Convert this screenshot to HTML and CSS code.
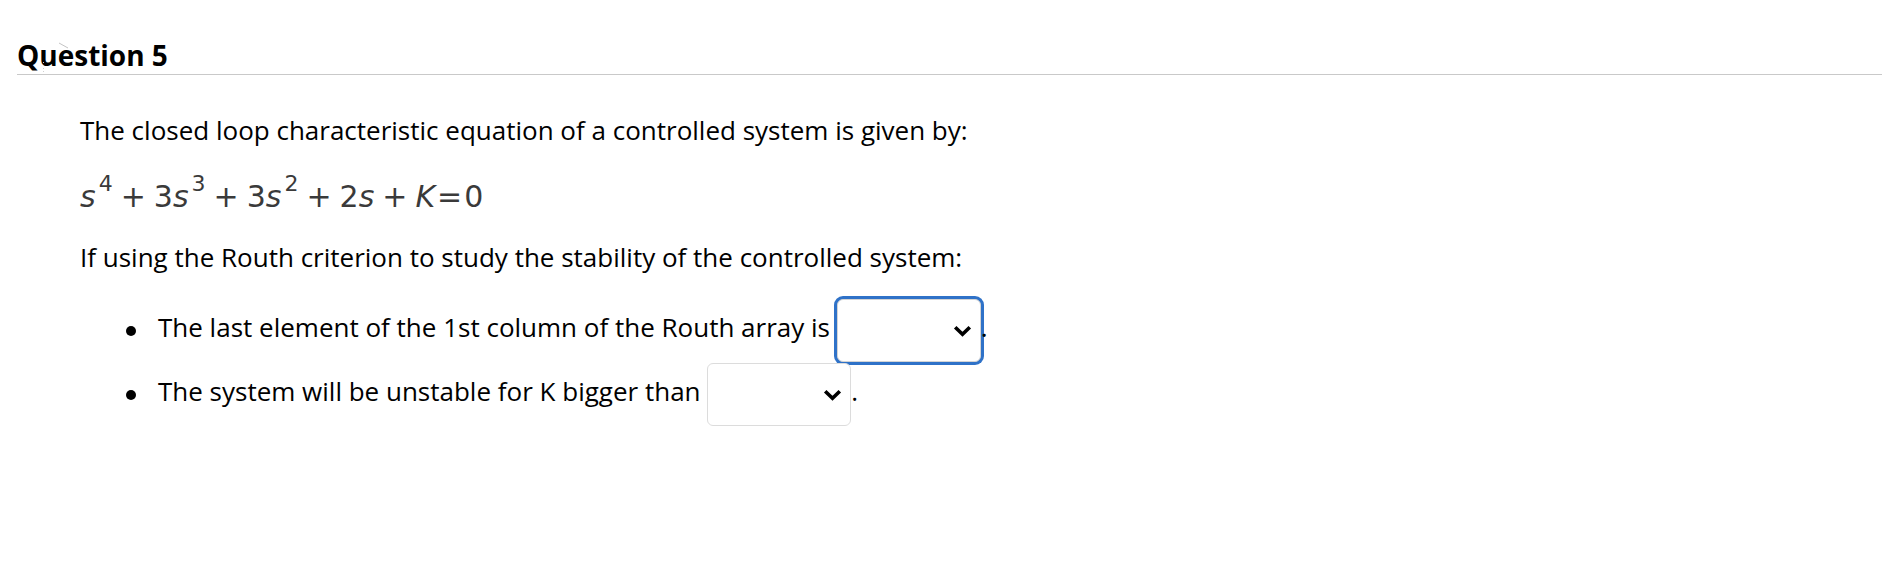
FILE: index.html
```html
<!DOCTYPE html>
<html lang="en">
<head>
<meta charset="utf-8">
<title>Question 5</title>
<link rel="stylesheet" href="styles.css">
</head>
<body>
<div class="question">
  <div class="question-header">
    <h2 class="question-title">Question 5</h2>
    <svg class="cursor-mark" width="60" height="40" viewBox="0 0 60 40" aria-hidden="true">
      <line x1="42" y1="6" x2="51" y2="11" stroke="#c4c4c4" stroke-width="1"/>
      <line x1="26.5" y1="25" x2="26.5" y2="37" stroke="#cfcfcf" stroke-width="1" stroke-dasharray="1 2"/>
    </svg>
  </div>
  <div class="question-body">
    <p class="para intro">The closed loop characteristic equation of a controlled system is given by:</p>
    <p class="equation"><span class="var">s</span><sup>4</sup><span class="op">+</span>3<span class="var">s</span><sup>3</sup><span class="op">+</span>3<span class="var">s</span><sup>2</sup><span class="op">+</span>2<span class="var">s</span><span class="op">+</span><span class="var">K</span><span class="eq">=</span>0</p>
    <p class="para task">If using the Routh criterion to study the stability of the controlled system:</p>
    <ul class="blanks">
      <li class="blank-item">The last element of the 1st column of the Routh array is <span class="dropdown focused"><svg class="chevron" width="19" height="12" viewBox="0 0 19 12"><polyline points="2.2,2.2 9.5,9.3 16.8,2.2" fill="none" stroke="#000" stroke-width="3.6"/></svg></span>.</li>
      <li class="blank-item">The system will be unstable for K bigger than <span class="dropdown"><svg class="chevron" width="19" height="12" viewBox="0 0 19 12"><polyline points="2.2,2.2 9.5,9.3 16.8,2.2" fill="none" stroke="#000" stroke-width="3.6"/></svg></span>.</li>
    </ul>
  </div>
</div>
</body>
</html>
```

FILE: styles.css
```css
html, body {
  margin: 0;
  padding: 0;
  background: #fff;
}

body {
  font-family: "Open Sans", "DejaVu Sans", sans-serif;
  color: #000;
}

.question-header {
  position: relative;
  margin: 37px 0 0 17px;
  padding-bottom: 1px;
  border-bottom: 1px solid #c9c9c9;
}

.question-title {
  margin: 0;
  font-size: 28px;
  line-height: 36px;
  font-weight: 700;
}

.cursor-mark {
  position: absolute;
  left: 0;
  top: 0;
  pointer-events: none;
}

.question-body {
  padding-left: 80px;
}

.para {
  margin: 0;
  font-size: 26px;
  line-height: 40px;
}

.intro {
  margin-top: 35px;
}

.equation {
  margin: 27px 0 0 0;
  font-family: "DejaVu Sans", sans-serif;
  font-size: 30px;
  line-height: 40px;
  color: #3a3a3a;
  white-space: nowrap;
}

.equation .var {
  font-style: italic;
}

.equation sup {
  font-size: 22px;
  line-height: 0;
  vertical-align: 16px;
  margin-left: 3px;
}

.equation .op {
  margin: 0 8px;
}

.equation .eq {
  margin: 0 2px;
}

.task {
  margin-top: 20px;
}

.blanks {
  margin: 22px 0 0 0;
  padding-left: 78px;
  list-style: none;
  font-size: 26px;
  line-height: 40px;
}

.blank-item + .blank-item {
  margin-top: 1px;
}

.blank-item::before {
  content: "";
  display: inline-block;
  width: 10px;
  height: 10px;
  border-radius: 50%;
  background: #000;
  margin-left: -32px;
  margin-right: 22px;
  vertical-align: middle;
}

.dropdown {
  display: inline-flex;
  box-sizing: border-box;
  width: 144px;
  height: 63px;
  align-items: center;
  justify-content: flex-end;
  padding-right: 8px;
  border: 1px solid #dcdcdc;
  border-radius: 6px;
  background: #fff;
  vertical-align: middle;
}

.dropdown.focused {
  border-color: #d4d4d4;
  box-shadow: 0 0 0 3px #2f72c8;
}

.chevron {
  display: block;
}
```
